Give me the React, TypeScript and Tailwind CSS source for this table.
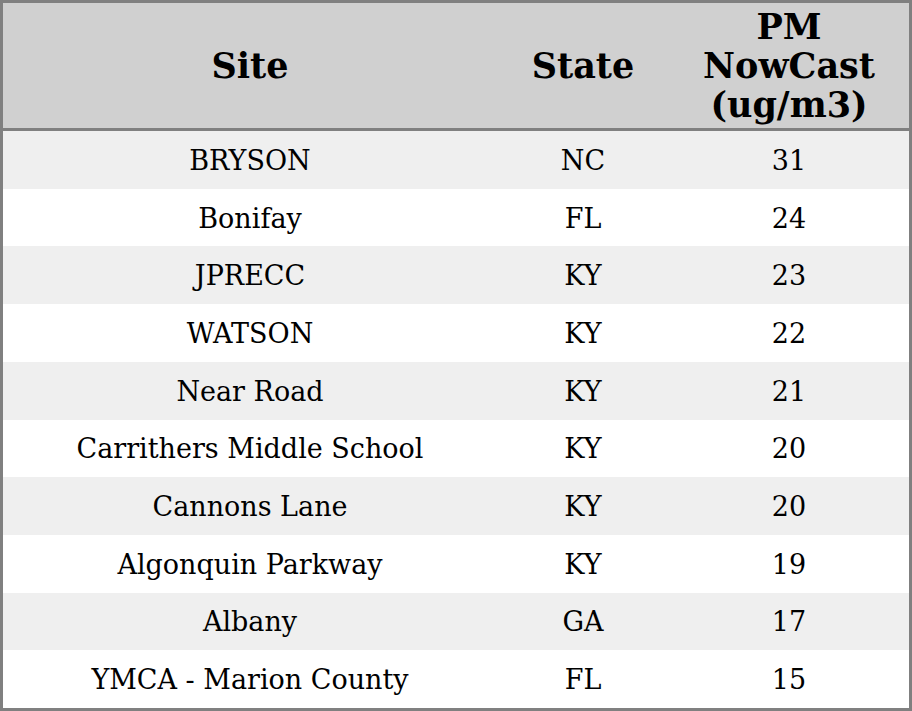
import React from "react";

const rows: [string, string, string][] = [
  ["BRYSON", "NC", "31"],
  ["Bonifay", "FL", "24"],
  ["JPRECC", "KY", "23"],
  ["WATSON", "KY", "22"],
  ["Near Road", "KY", "21"],
  ["Carrithers Middle School", "KY", "20"],
  ["Cannons Lane", "KY", "20"],
  ["Algonquin Parkway", "KY", "19"],
  ["Albany", "GA", "17"],
  ["YMCA - Marion County", "FL", "15"],
];

export default function App() {
  return (
    <div
      className="w-[912px] h-[711px] bg-white"
      style={{ fontFamily: '"DejaVu Serif", serif' }}
    >
      <div className="w-[912px] h-[711px] border-[3px] border-[#808080] flex flex-col">
        <div className="h-[125px] bg-[#d0d0d0] grid grid-cols-[494px_172px_240px] items-center text-center font-bold text-[35px] leading-[39px] text-black">
          <div>Site</div>
          <div>State</div>
          <div>
            PM
            <br />
            NowCast
            <br />
            (ug/m3)
          </div>
        </div>
        <div className="h-[3px] bg-[#808080]" />
        <div className="flex-1 flex flex-col">
          {rows.map((r, i) => (
            <div
              key={i}
              className={
                "flex-1 grid grid-cols-[494px_172px_240px] items-center pt-[2px] text-center text-[27px] leading-[32px] text-black " +
                (i % 2 === 0 ? "bg-[#efefef]" : "bg-white")
              }
            >
              <div>{r[0]}</div>
              <div>{r[1]}</div>
              <div>{r[2]}</div>
            </div>
          ))}
        </div>
      </div>
    </div>
  );
}
